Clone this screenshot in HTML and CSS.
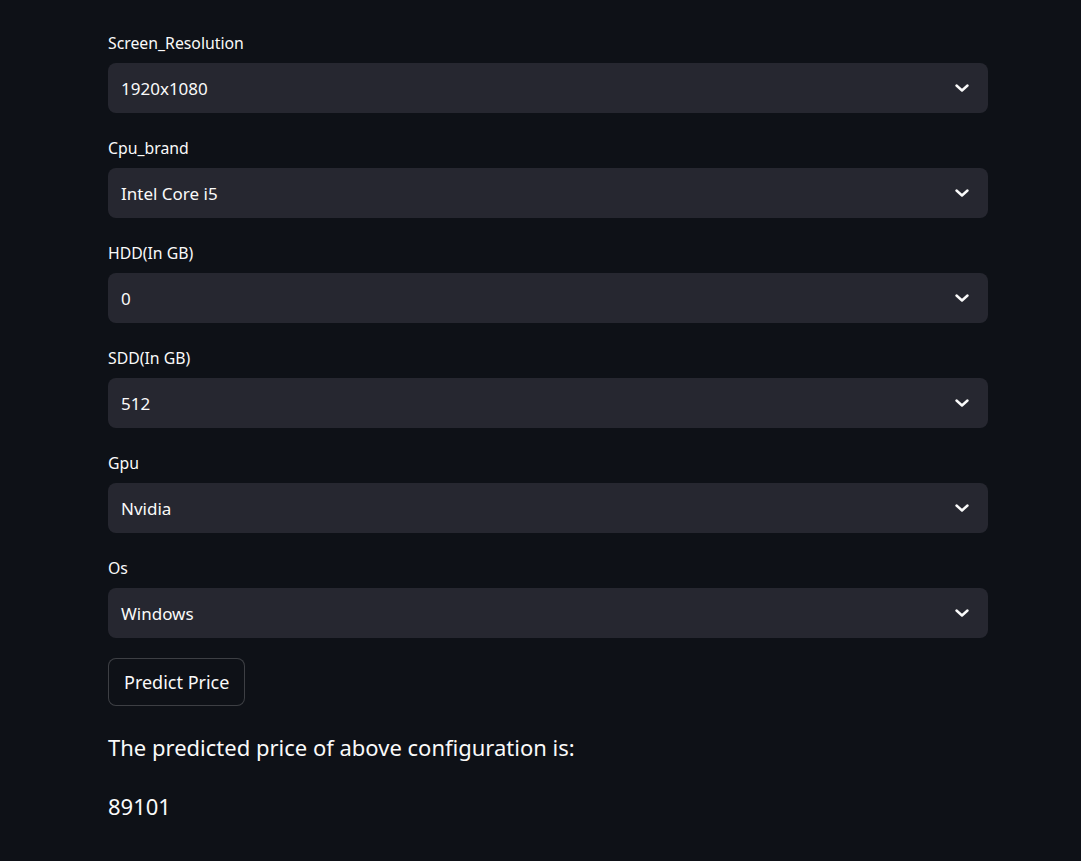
FILE: index.html
```html
<!DOCTYPE html>
<html>
<head>
<meta charset="utf-8">
<link rel="stylesheet" href="styles.css">
</head>
<body>
<main class="main">
  <div class="field">
    <label class="label">Screen_Resolution</label>
    <div class="select"><span class="value">1920x1080</span><svg class="chev" viewBox="0 0 14 8" width="14" height="8"><path d="M1.5 1.5 L7 6.5 L12.5 1.5" fill="none" stroke="#fafafa" stroke-width="2.4" stroke-linecap="round" stroke-linejoin="round"/></svg></div>
  </div>
  <div class="field">
    <label class="label">Cpu_brand</label>
    <div class="select"><span class="value">Intel Core i5</span><svg class="chev" viewBox="0 0 14 8" width="14" height="8"><path d="M1.5 1.5 L7 6.5 L12.5 1.5" fill="none" stroke="#fafafa" stroke-width="2.4" stroke-linecap="round" stroke-linejoin="round"/></svg></div>
  </div>
  <div class="field">
    <label class="label">HDD(In GB)</label>
    <div class="select"><span class="value">0</span><svg class="chev" viewBox="0 0 14 8" width="14" height="8"><path d="M1.5 1.5 L7 6.5 L12.5 1.5" fill="none" stroke="#fafafa" stroke-width="2.4" stroke-linecap="round" stroke-linejoin="round"/></svg></div>
  </div>
  <div class="field">
    <label class="label">SDD(In GB)</label>
    <div class="select"><span class="value">512</span><svg class="chev" viewBox="0 0 14 8" width="14" height="8"><path d="M1.5 1.5 L7 6.5 L12.5 1.5" fill="none" stroke="#fafafa" stroke-width="2.4" stroke-linecap="round" stroke-linejoin="round"/></svg></div>
  </div>
  <div class="field">
    <label class="label">Gpu</label>
    <div class="select"><span class="value">Nvidia</span><svg class="chev" viewBox="0 0 14 8" width="14" height="8"><path d="M1.5 1.5 L7 6.5 L12.5 1.5" fill="none" stroke="#fafafa" stroke-width="2.4" stroke-linecap="round" stroke-linejoin="round"/></svg></div>
  </div>
  <div class="field">
    <label class="label">Os</label>
    <div class="select"><span class="value">Windows</span><svg class="chev" viewBox="0 0 14 8" width="14" height="8"><path d="M1.5 1.5 L7 6.5 L12.5 1.5" fill="none" stroke="#fafafa" stroke-width="2.4" stroke-linecap="round" stroke-linejoin="round"/></svg></div>
  </div>
  <button class="btn">Predict Price</button>
  <h3 class="result-title">The predicted price of above configuration is:</h3>
  <p class="result">89101</p>
</main>
</body>
</html>
```

FILE: styles.css
```css
html, body {
  margin: 0;
  padding: 0;
  background: #0e1117;
  color: #fafafa;
  font-family: "Noto Sans", "Open Sans", sans-serif;
}
.main {
  width: 880px;
  padding: 33px 0 0 108px;
  display: flex;
  flex-direction: column;
}
.field {
  display: flex;
  flex-direction: column;
  margin-bottom: 25px;
}
.field:last-of-type {
  margin-bottom: 20px;
}
.label {
  font-size: 15.8px;
  line-height: 21px;
  height: 21px;
  margin-bottom: 9px;
  color: #fafafa;
}
.select {
  height: 50px;
  background: #262730;
  border-radius: 8px;
  display: flex;
  align-items: center;
  justify-content: space-between;
  padding: 0 19px 0 13px;
  box-sizing: border-box;
}
.value {
  font-size: 17px;
}
.chev {
  display: block;
}
.btn {
  align-self: flex-start;
  height: 48px;
  padding: 0 15px;
  background: #0e1117;
  border: 1px solid rgba(250, 250, 250, 0.2);
  border-radius: 8px;
  color: #fafafa;
  font-family: inherit;
  font-size: 18px;
}
.result-title {
  margin: 26px 0 0;
  font-size: 22px;
  font-weight: 400;
  line-height: 30px;
}
.result {
  margin: 29px 0 0;
  font-size: 22px;
  line-height: 30px;
}
```
